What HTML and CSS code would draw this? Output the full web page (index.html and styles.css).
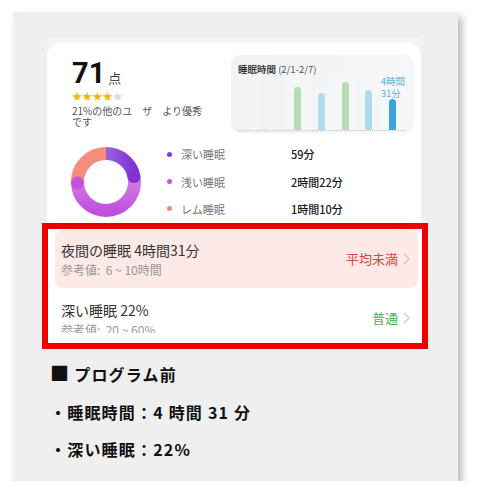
FILE: index.html
```html
<!DOCTYPE html>
<html lang="ja">
<head>
    <meta charset="UTF-8">
    <meta name="viewport" content="width=device-width, initial-scale=1.0">
    <title>睡眠スコア - プログラム前</title>
    <link rel="stylesheet" href="styles.css">
</head>
<body>

    <div class="frame">
        <div class="shot">
            <div class="card">

                <!-- スコアと週間グラフ -->
                <div class="summary">
                    <div class="score">
                        <div class="points"><span class="num">71</span><span class="unit">点</span></div>
                        <div class="stars"><span class="on">★★★★</span><span class="off">★</span></div>
                        <p class="rank">21%の他のユ　ザ　より優秀です</p>
                    </div>
                    <div class="chart">
                        <div class="chart-title">睡眠時間 <span>(2/1-2/7)</span></div>
                        <div class="plot">
                            <div class="col"></div>
                            <div class="col"></div>
                            <div class="col"><div class="bar green" style="height: 43px"></div></div>
                            <div class="col"><div class="bar blue" style="height: 37px"></div></div>
                            <div class="col"><div class="bar green" style="height: 48px"></div></div>
                            <div class="col"><div class="bar blue" style="height: 40px"></div></div>
                            <div class="col">
                                <div class="bar-label">4時間<br>31分</div>
                                <div class="bar today" style="height: 31px"></div>
                            </div>
                        </div>
                    </div>
                </div>

                <!-- 睡眠の内訳 -->
                <div class="breakdown">
                    <svg class="donut" width="70" height="70" viewBox="0 0 70 70">
                        <defs>
                            <linearGradient id="gDeep" x1="0" y1="0" x2="0" y2="1">
                                <stop offset="0" stop-color="#ab95e4"/>
                                <stop offset="1" stop-color="#8330d6"/>
                            </linearGradient>
                            <linearGradient id="gLight" x1="1" y1="0" x2="0" y2="0">
                                <stop offset="0" stop-color="#dba6ea"/>
                                <stop offset="1" stop-color="#c250de"/>
                            </linearGradient>
                        </defs>
                        <g transform="rotate(-90 35 35)">
                            <circle cx="35" cy="35" r="28.5" fill="none" stroke="#f58d7c" stroke-width="13"
                                    stroke-dasharray="46 179.07" stroke-dashoffset="-133.3"/>
                            <circle cx="35" cy="35" r="28.5" fill="none" stroke="url(#gLight)" stroke-width="13"
                                    stroke-dasharray="94 179.07" stroke-dashoffset="-39.3"/>
                            <circle cx="35" cy="35" r="28.5" fill="none" stroke="url(#gDeep)" stroke-width="13"
                                    stroke-dasharray="39.3 179.07"/>
                        </g>
                        <circle cx="6.52" cy="36" r="6.5" fill="#c454de"/>
                        <circle cx="62.98" cy="29.56" r="6.5" fill="#8531d6"/>
                    </svg>
                    <ul class="legend">
                        <li><i class="dot deep"></i><span class="name">深い睡眠</span><span class="val">59分</span></li>
                        <li><i class="dot light"></i><span class="name">浅い睡眠</span><span class="val">2時間22分</span></li>
                        <li><i class="dot rem"></i><span class="name">レム睡眠</span><span class="val">1時間10分</span></li>
                    </ul>
                </div>

                <!-- 赤枠の部分 -->
                <div class="highlight">
                    <div class="item warn">
                        <div>
                            <div class="item-title">夜間の睡眠 4時間31分</div>
                            <div class="item-ref">参考値:&nbsp; 6 ~ 10時間</div>
                        </div>
                        <div class="status red">平均未満<svg class="chev" width="7" height="12" viewBox="0 0 7 12"><path d="M1 1l5 5-5 5" fill="none" stroke="#c8c8c8" stroke-width="1.2"/></svg></div>
                    </div>
                    <div class="item cut">
                        <div>
                            <div class="item-title">深い睡眠 22%</div>
                            <div class="item-ref">参考値:&nbsp; 20 ~ 60%</div>
                        </div>
                        <div class="status green">普通<svg class="chev" width="7" height="12" viewBox="0 0 7 12"><path d="M1 1l5 5-5 5" fill="none" stroke="#c8c8c8" stroke-width="1.2"/></svg></div>
                    </div>
                </div>

            </div>
        </div>

        <div class="notes">
            <p><span class="sq">■</span>プログラム前</p>
            <p>・睡眠時間：4 時間 31 分</p>
            <p>・深い睡眠：22%</p>
        </div>
    </div>

</body>
</html>
```

FILE: styles.css
```css
body {
    margin: 0;
    background: #fff;
    font-family: "Noto Sans CJK JP", "Noto Sans", sans-serif;
    color: #222;
}
.frame {
    margin: 12px 0 0 13px;
    width: 445px;
    height: 469px;
    background: #efefef;
    box-shadow: 4px 5px 7px rgba(0, 0, 0, 0.28);
    box-sizing: border-box;
    padding-top: 26px;
}
.shot {
    margin-left: 34px;
    width: 374px;
    background: #f3f4f4;
    padding-top: 5px;
}
.card {
    background: #fff;
    border-radius: 14px 14px 0 0;
}

/* score + chart */
.summary {
    display: flex;
    justify-content: space-between;
    padding: 12px 7px 0 25px;
}
.score {
    padding-top: 2px;
}
.points {
    display: flex;
    align-items: baseline;
    height: 32px;
}
.num {
    font-family: Roboto, "Liberation Sans", sans-serif;
    font-weight: 700;
    font-size: 29px;
    line-height: 32px;
    color: #111;
}
.unit {
    font-size: 13px;
    line-height: 16px;
    color: #444;
    margin-left: 3px;
}
.stars {
    margin-top: 1px;
    font-size: 10px;
    line-height: 12px;
    letter-spacing: 0.2px;
}
.stars .on {
    color: #f6b400;
}
.stars .off {
    color: #dcdcdc;
}
.rank {
    margin: 3px 0 0;
    width: 134px;
    font-size: 10px;
    line-height: 11px;
    color: #555;
}
.chart {
    width: 183px;
    height: 78px;
    box-sizing: border-box;
    padding: 8px 9px 3px 7px;
    border-radius: 9px;
    background: linear-gradient(90deg, #eff1f3, #f6f7f8);
    display: flex;
    flex-direction: column;
}
.chart-title {
    font-size: 9.5px;
    line-height: 12px;
    color: #222;
    font-weight: 500;
}
.chart-title span {
    color: #555;
    font-weight: 400;
}
.plot {
    flex: 1;
    display: flex;
    border-bottom: 1px dotted #c6c6c6;
}
.col {
    flex: 1;
    display: flex;
    flex-direction: column;
    justify-content: flex-end;
    align-items: center;
}
.col:nth-child(odd) {
    background: rgba(255, 255, 255, 0.18);
}
.bar {
    width: 7px;
    border-radius: 4px 4px 0 0;
}
.bar.green {
    background: #b6dcb5;
}
.bar.blue {
    background: #afdaf0;
}
.bar.today {
    background: #3ea5dc;
}
.bar-label {
    font-size: 9.5px;
    line-height: 12px;
    color: #5ab0da;
    white-space: nowrap;
}

/* donut + legend */
.breakdown {
    display: flex;
    align-items: center;
    height: 70px;
    margin-top: 13.5px;
    padding-left: 24px;
}
.donut {
    display: block;
}
.legend {
    list-style: none;
    margin: 0 0 0 26px;
    padding: 0;
}
.legend li {
    display: flex;
    align-items: center;
    height: 27.3px;
    font-size: 11px;
}
.dot {
    width: 5px;
    height: 5px;
    border-radius: 50%;
    margin-right: 9px;
}
.dot.deep {
    background: #8a36d8;
}
.dot.light {
    background: #c458de;
}
.dot.rem {
    background: #f08b80;
}
.name {
    width: 110px;
    color: #777;
}
.val {
    color: #1a1a1a;
    font-weight: 500;
}

/* red box */
.highlight {
    margin: 6.5px -7px 0 -5px;
    height: 113px;
    overflow: hidden;
    border: 6px solid #ec0000;
    background: #fff;
    padding: 1px 4px 0 7px;
}
.item {
    display: flex;
    align-items: center;
    justify-content: space-between;
    padding: 0 8px 0 6px;
}
.item.warn {
    height: 58px;
    box-sizing: border-box;
    background: #fde9e6;
    border-radius: 8px;
}
.item.cut {
    height: 45px;
    box-sizing: border-box;
    overflow: hidden;
    align-items: flex-start;
    padding-top: 12px;
}
.item.cut .status {
    margin-top: 9px;
}
.item-title {
    font-size: 14px;
    line-height: 20px;
    color: #333;
}
.item-ref {
    font-size: 12px;
    line-height: 19px;
    color: #999;
}
.status {
    display: flex;
    align-items: center;
    font-size: 13px;
    line-height: 18px;
}
.status.red {
    color: #e4403c;
}
.status.green {
    color: #4fae54;
}
.chev {
    margin-left: 5px;
}

/* notes under the screenshot */
.notes {
    padding: 5px 0 0 37px;
}
.notes p {
    margin: 0;
    font-size: 16px;
    line-height: 37.5px;
    font-weight: 700;
    letter-spacing: 1.2px;
    color: #111;
}
.sq {
    font-size: 19px;
    margin-right: 4px;
}
```
